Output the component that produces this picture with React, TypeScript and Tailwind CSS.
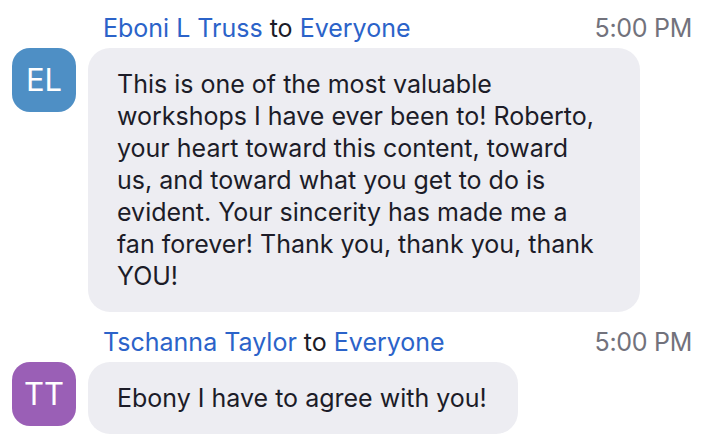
const messages = [
  {
    initials: 'EL',
    name: 'Eboni L Truss',
    time: '5:00 PM',
    avatar: 'bg-[#4e8fc5]',
    lines: [
      'This is one of the most valuable',
      'workshops I have ever been to! Roberto,',
      'your heart toward this content, toward',
      'us, and toward what you get to do is',
      'evident. Your sincerity has made me a',
      'fan forever! Thank you, thank you, thank',
      'YOU!',
    ],
    wide: true,
  },
  {
    initials: 'TT',
    name: 'Tschanna Taylor',
    time: '5:00 PM',
    avatar: 'bg-[#9a5fb6]',
    lines: ['Ebony I have to agree with you!'],
    wide: false,
  },
];

export default function App() {
  return (
    <div
      className="w-[716px] h-[442px] bg-white overflow-hidden pt-[13px] pl-[12px] pr-[24px] flex flex-col gap-[15px]"
      style={{ fontFamily: 'Inter, "Noto Sans", sans-serif' }}
    >
      {messages.map((m) => (
        <div key={m.name} className="grid grid-cols-[64px_1fr] gap-x-[12px] gap-y-[3px]">
          <div />
          <div className="flex items-center justify-between pl-[15px] h-[32px] text-[25px]">
            <span className="whitespace-nowrap">
              <span className="text-[#2b63c9]">{m.name}</span>
              <span className="text-[#1c1c28]"> to </span>
              <span className="text-[#2b63c9]">Everyone</span>
            </span>
            <span className="text-[#72727c] tracking-[-0.3px]">{m.time}</span>
          </div>
          <div
            className={`${m.avatar} w-[64px] h-[64px] rounded-[18px] flex items-center justify-center text-white text-[31px]`}
          >
            {m.initials}
          </div>
          <div className={m.wide ? 'pr-[52px]' : 'flex'}>
            <div className="bg-[#ededf2] rounded-[22px] pl-[29px] pr-[31px] py-5 text-[25px] leading-[32px] text-[#1c1c28]">
              {m.lines.map((l) => (
                <div key={l} className="whitespace-nowrap">{l}</div>
              ))}
            </div>
          </div>
        </div>
      ))}
    </div>
  );
}
